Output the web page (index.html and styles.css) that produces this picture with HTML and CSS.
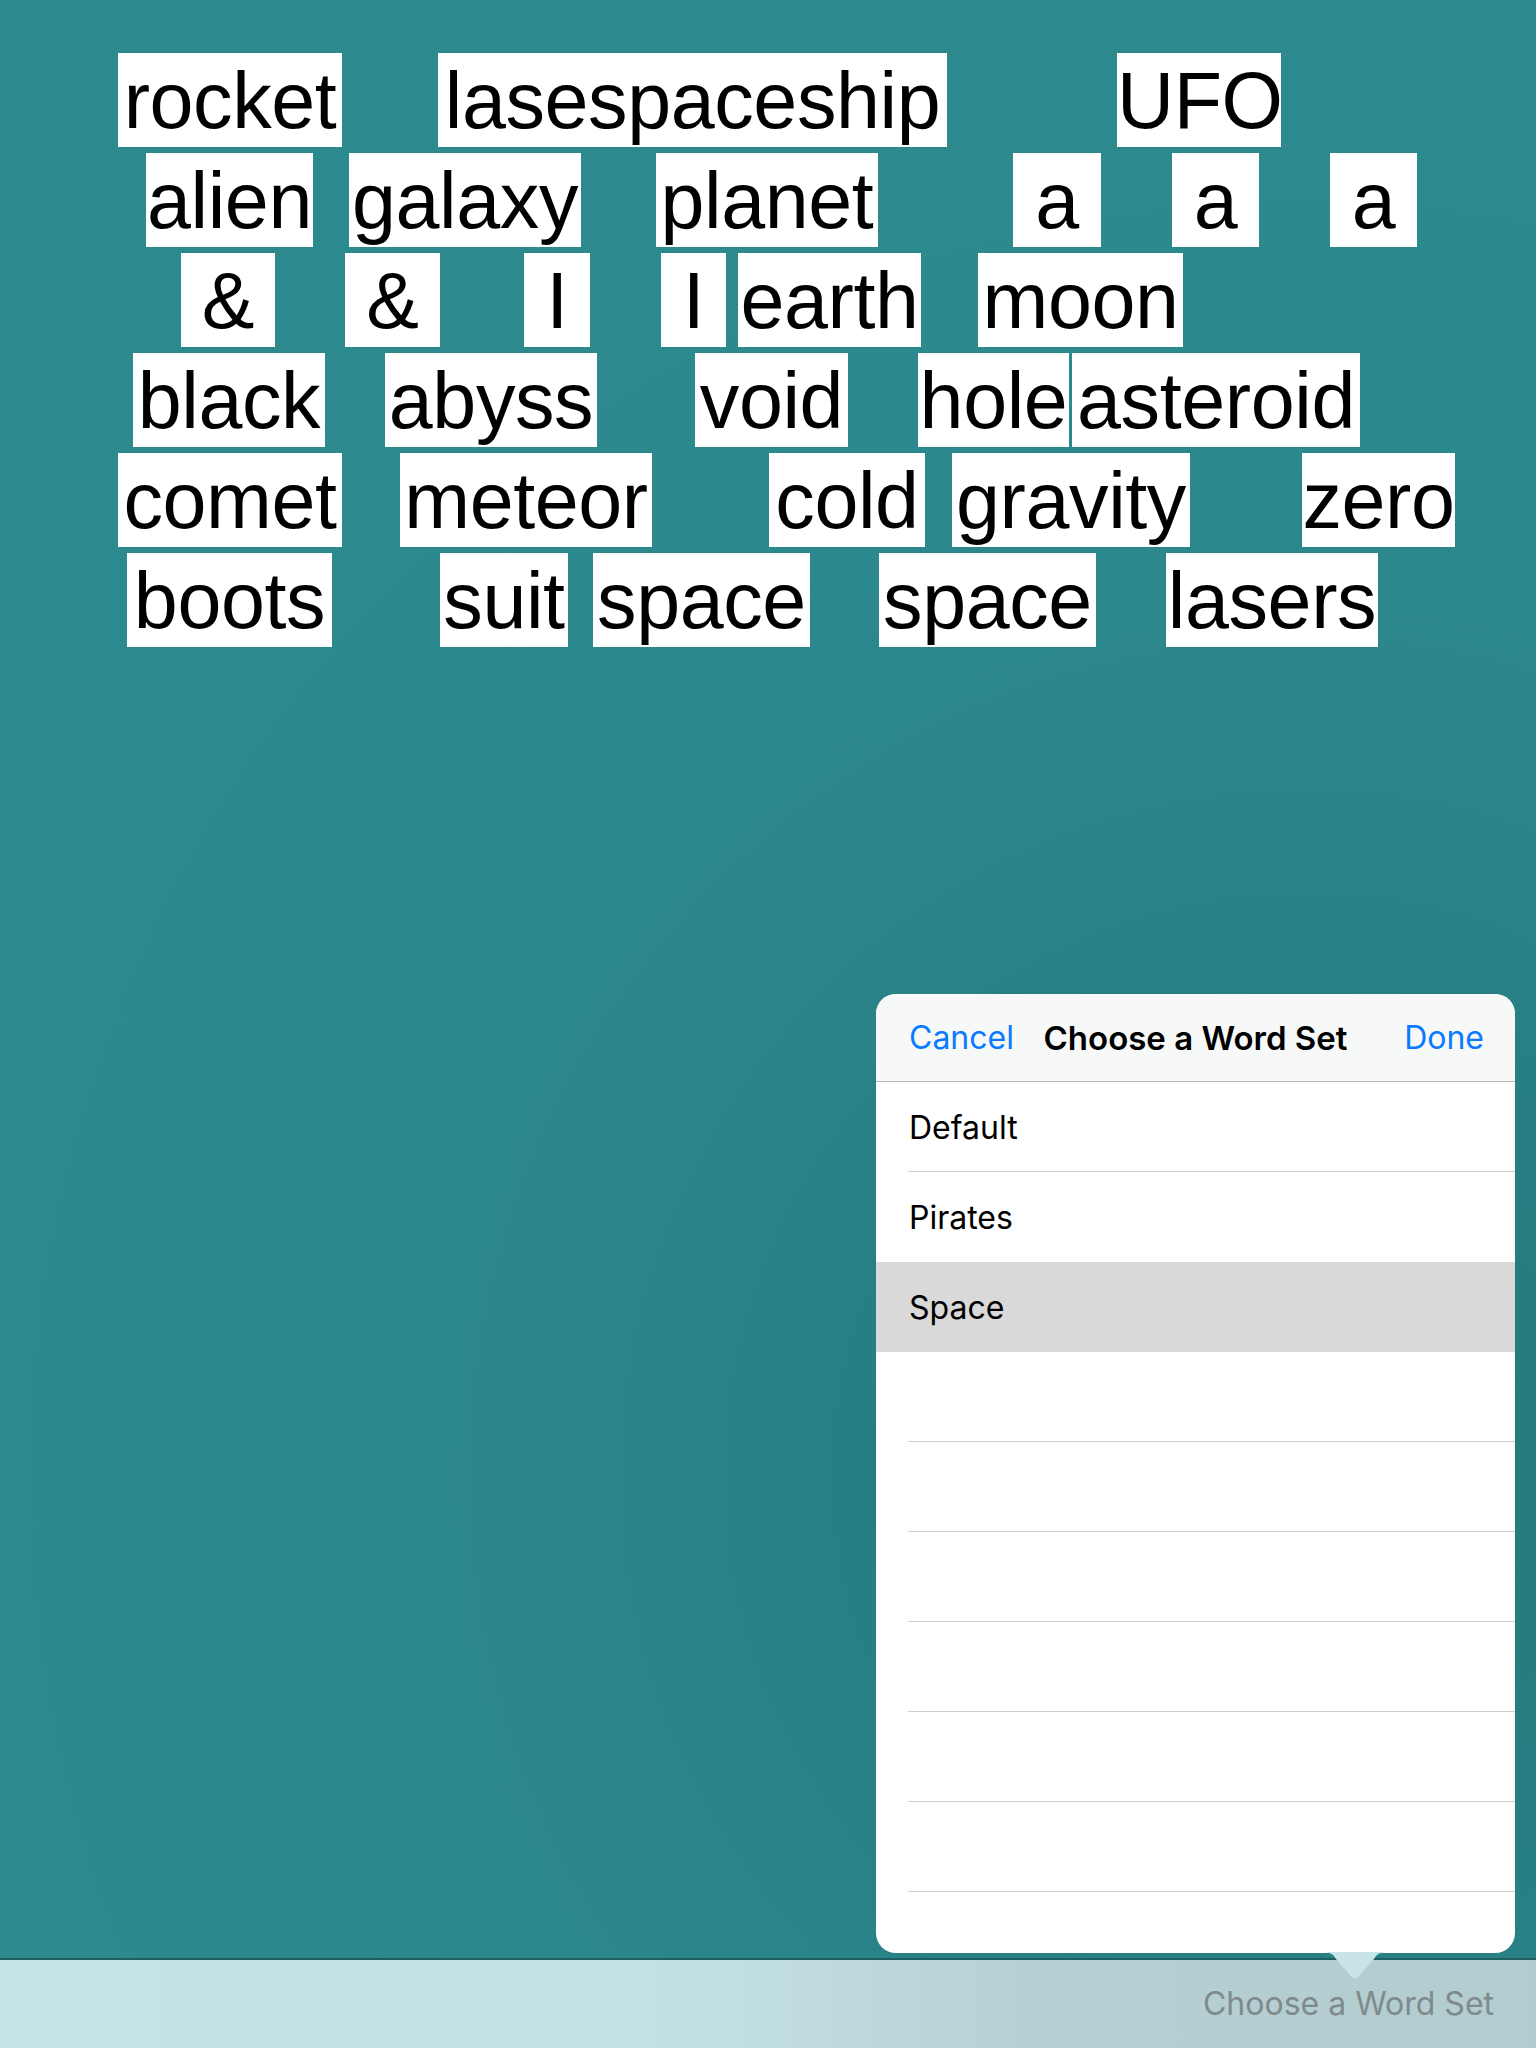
FILE: index.html
```html
<!DOCTYPE html>
<html lang="en">
<head>
<meta charset="utf-8">
<title>Word Magnets</title>
<link rel="stylesheet" href="styles.css">
</head>
<body>
<div class="screen">
  <main class="board">
    <span class="tile" style="left:118px;top:53px;width:224px">rocket</span>
    <span class="tile" style="left:438px;top:53px;width:509px">lasespaceship</span>
    <span class="tile" style="left:1117px;top:53px;width:164px">UFO</span>

    <span class="tile" style="left:146px;top:153px;width:167px">alien</span>
    <span class="tile" style="left:349px;top:153px;width:232px">galaxy</span>
    <span class="tile" style="left:656px;top:153px;width:222px">planet</span>
    <span class="tile" style="left:1013px;top:153px;width:88px">a</span>
    <span class="tile" style="left:1172px;top:153px;width:87px">a</span>
    <span class="tile" style="left:1330px;top:153px;width:87px">a</span>

    <span class="tile" style="left:181px;top:253px;width:94px">&amp;</span>
    <span class="tile" style="left:345px;top:253px;width:95px">&amp;</span>
    <span class="tile" style="left:524px;top:253px;width:66px">I</span>
    <span class="tile" style="left:661px;top:253px;width:65px">I</span>
    <span class="tile" style="left:738px;top:253px;width:183px">earth</span>
    <span class="tile" style="left:978px;top:253px;width:205px">moon</span>

    <span class="tile" style="left:133px;top:353px;width:192px">black</span>
    <span class="tile" style="left:385px;top:353px;width:212px">abyss</span>
    <span class="tile" style="left:695px;top:353px;width:153px">void</span>
    <span class="tile" style="left:918px;top:353px;width:151px">hole</span>
    <span class="tile" style="left:1072px;top:353px;width:288px">asteroid</span>

    <span class="tile" style="left:118px;top:453px;width:224px">comet</span>
    <span class="tile" style="left:400px;top:453px;width:252px">meteor</span>
    <span class="tile" style="left:769px;top:453px;width:156px">cold</span>
    <span class="tile" style="left:952px;top:453px;width:238px">gravity</span>
    <span class="tile" style="left:1302px;top:453px;width:153px">zero</span>

    <span class="tile" style="left:127px;top:553px;width:205px">boots</span>
    <span class="tile" style="left:440px;top:553px;width:128px">suit</span>
    <span class="tile" style="left:593px;top:553px;width:217px">space</span>
    <span class="tile" style="left:879px;top:553px;width:217px">space</span>
    <span class="tile" style="left:1166px;top:553px;width:212px">lasers</span>
  </main>

  <footer class="toolbar">
    <span class="toolbar-label">Choose a Word Set</span>
  </footer>

  <section class="popover">
    <header class="pop-header">
      <span class="pop-btn">Cancel</span>
      <span class="pop-title">Choose a Word Set</span>
      <span class="pop-btn">Done</span>
    </header>
    <ul class="pop-list">
      <li class="row">Default</li>
      <li class="row row-before-sel">Pirates</li>
      <li class="row row-selected">Space</li>
      <li class="row"></li>
      <li class="row"></li>
      <li class="row"></li>
      <li class="row"></li>
      <li class="row"></li>
      <li class="row"></li>
      <li class="row"></li>
    </ul>
  </section>
  <svg class="pop-arrow" width="66" height="28" viewBox="0 0 66 28">
    <path d="M0 0 H66 C58 0 55 2 52 7 L37 24 C35 27 31 27 29 24 L14 7 C11 2 8 0 0 0 Z" fill="#c9e4e6"/>
  </svg>
</div>
</body>
</html>
```

FILE: styles.css
```css
html, body {
  margin: 0;
  padding: 0;
}

body {
  width: 1536px;
  height: 2048px;
  overflow: hidden;
  font-family: "Inter", "Roboto", "Liberation Sans", sans-serif;
}

.screen {
  position: relative;
  width: 1536px;
  height: 2048px;
  display: flex;
  flex-direction: column;
  background: radial-gradient(ellipse 1300px 1300px at 85% 72%, #25777b 0%, #287f83 35%, #2b878c 65%, #2c8a8f 100%);
}

.board {
  position: relative;
  flex: 1;
}

.tile {
  position: absolute;
  height: 94px;
  background: #ffffff;
  color: #000000;
  font-family: "Liberation Sans", Arial, sans-serif;
  font-size: 79px;
  letter-spacing: -0.4px;
  line-height: 96px;
  text-align: center;
  white-space: nowrap;
}

.toolbar {
  height: 88px;
  border-top: 2px solid #1f5f63;
  display: flex;
  align-items: center;
  justify-content: flex-end;
  padding-right: 42px;
  background: linear-gradient(90deg, #c5e4e6 0%, #c3e1e3 45%, #b6cfd3 68%, #b3ccd0 100%);
}

.toolbar-label {
  font-size: 32px;
  color: #7f8a8b;
  padding-bottom: 2px;
}

.popover {
  position: absolute;
  left: 876px;
  top: 994px;
  width: 639px;
  height: 959px;
  background: #ffffff;
  border-radius: 20px;
  overflow: hidden;
  display: flex;
  flex-direction: column;
}

.pop-header {
  height: 87px;
  flex: none;
  background: #f7f8f8;
  border-bottom: 1px solid #b9b9bb;
  display: flex;
  align-items: center;
  justify-content: space-between;
  padding: 0 31px 0 33px;
  position: relative;
}

.pop-btn {
  font-size: 32px;
  color: #0a7aff;
}

.pop-title {
  position: absolute;
  left: 0;
  right: 0;
  text-align: center;
  font-size: 33px;
  font-weight: 600;
  color: #000000;
  pointer-events: none;
}

.pop-list {
  list-style: none;
  margin: 0;
  padding: 0;
}

.row {
  height: 90px;
  display: flex;
  align-items: center;
  padding-left: 33px;
  font-size: 32px;
  color: #000000;
  position: relative;
}

.row::after {
  content: "";
  position: absolute;
  left: 32px;
  right: 0;
  bottom: 0;
  height: 1px;
  background: #cfcfd2;
}

.row-before-sel::after,
.row-selected::after {
  display: none;
}

.row-selected {
  background: #d9d9d9;
}

.pop-arrow {
  position: absolute;
  left: 1322px;
  top: 1952px;
  display: block;
}
```
